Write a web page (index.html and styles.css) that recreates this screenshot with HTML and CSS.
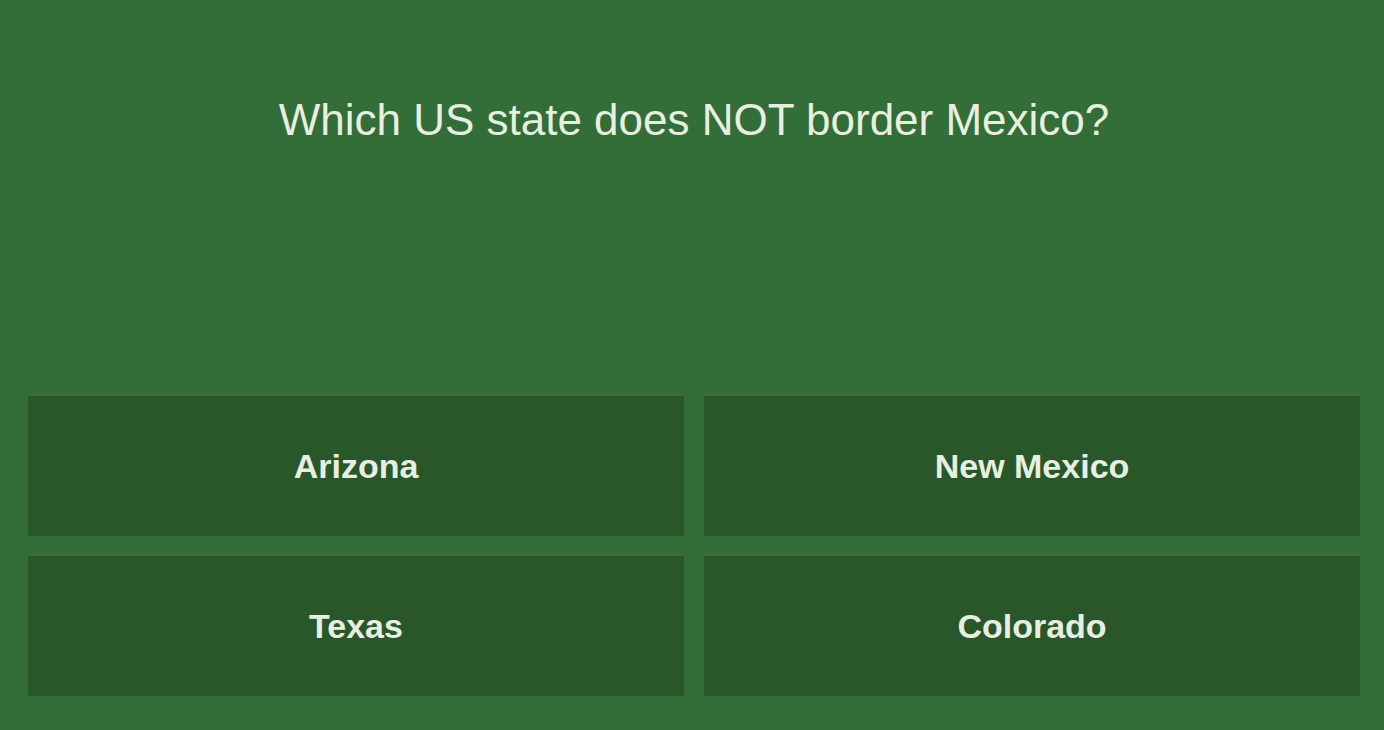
FILE: index.html
```html
<!DOCTYPE html>
<html lang="en">
<head>
<meta charset="utf-8">
<title>Quiz</title>
<link rel="stylesheet" href="styles.css">
</head>
<body>
<main class="quiz">
  <section class="question">
    <h1 class="question-text">Which US state does NOT border Mexico?</h1>
  </section>
  <section class="answers">
    <button class="answer">Arizona</button>
    <button class="answer">New Mexico</button>
    <button class="answer">Texas</button>
    <button class="answer">Colorado</button>
  </section>
</main>
</body>
</html>
```

FILE: styles.css
```css
html, body {
  margin: 0;
  padding: 0;
  height: 100%;
}
body {
  background: #336d37;
  font-family: "Liberation Sans", Arial, sans-serif;
  color: #e8efe0;
}
.quiz {
  box-sizing: border-box;
  height: 100vh;
  display: flex;
  flex-direction: column;
  padding: 0 24px 34px 28px;
}
.question {
  flex: 1;
  padding-top: 95px;
}
.question-text {
  margin: 0;
  font-size: 44px;
  font-weight: normal;
  line-height: normal;
  text-align: center;
}
.answers {
  display: grid;
  grid-template-columns: 656px 656px;
  grid-auto-rows: 140px;
  gap: 20px;
}
.answer {
  border: none;
  margin: 0;
  padding: 0;
  background: #29572a;
  color: #e8efe0;
  font-family: "Liberation Sans", Arial, sans-serif;
  font-size: 34px;
  font-weight: bold;
  cursor: pointer;
}
```
